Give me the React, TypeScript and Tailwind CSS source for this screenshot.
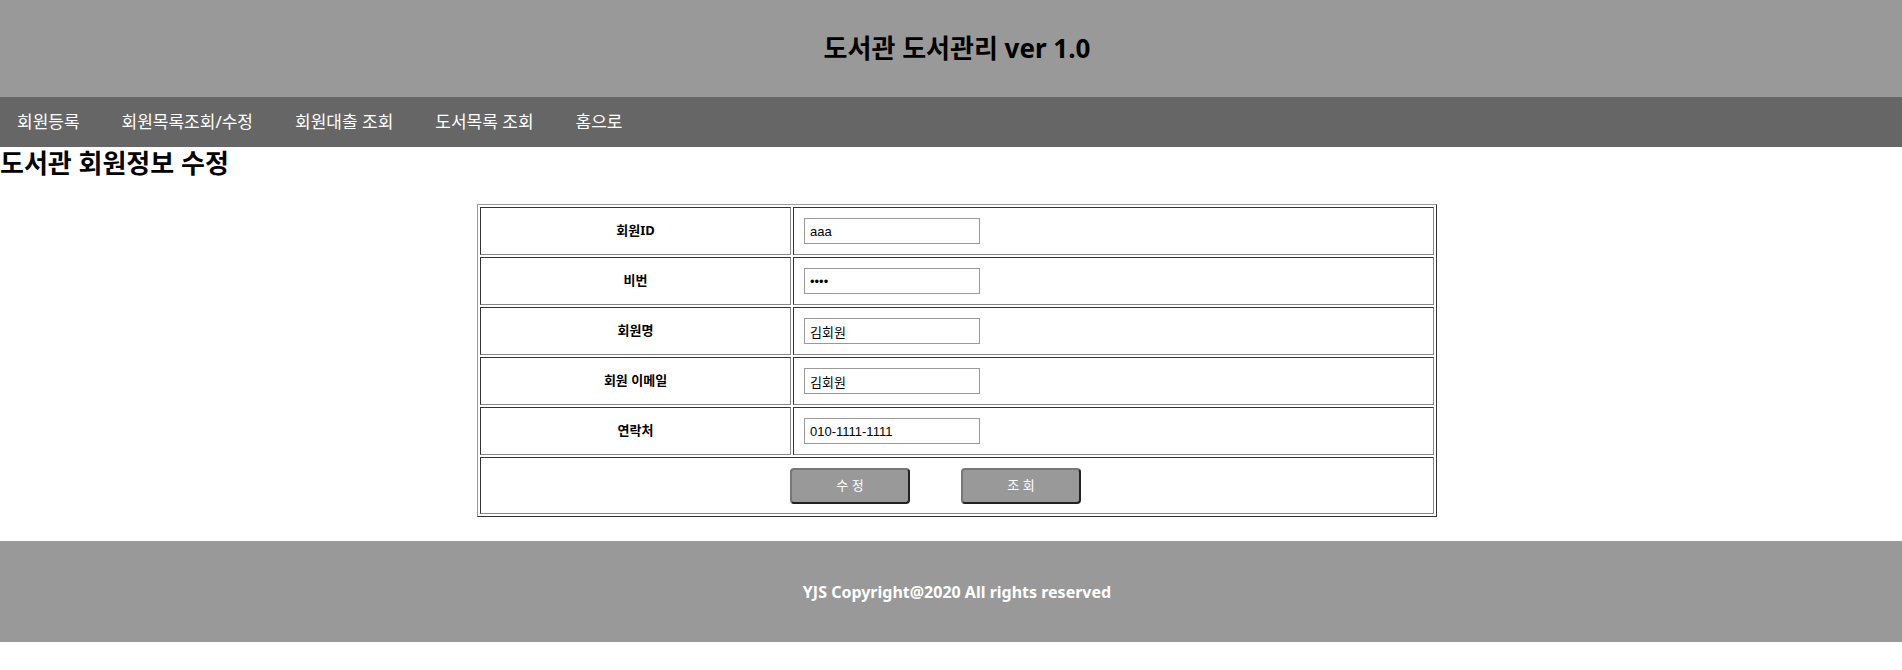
import React from "react";

const font = "font-['Noto_Sans','Noto_Sans_CJK_KR',sans-serif]";
const inputFont = "font-['Liberation_Sans','Noto_Sans_CJK_KR',sans-serif]";

const menus = ["회원등록", "회원목록조회/수정", "회원대출 조회", "도서목록 조회", "홈으로"];

const rows = [
  { label: "회원ID", value: "aaa", type: "text" },
  { label: "비번", value: "1234", type: "password" },
  { label: "회원명", value: "김회원", type: "text" },
  { label: "회원 이메일", value: "김회원", type: "text" },
  { label: "연락처", value: "010-1111-1111", type: "text" },
];

const cell = "border border-t-[#333] border-l-[#333] border-r-[#888] border-b-[#888]";

export default function App() {
  return (
    <div className={`${font} min-h-screen bg-white text-black`}>
      {/* Header */}
      <header className="flex h-[97px] items-center justify-center bg-[#999] pl-3">
        <h1 className="text-[26px] font-bold">도서관 도서관리 ver 1.0</h1>
      </header>

      {/* Menu */}
      <nav className="flex h-[50px] items-center gap-[42px] bg-[#666] pl-[17px] text-[17px] text-white">
        {menus.map((m) => (
          <span key={m} className="cursor-pointer">
            {m}
          </span>
        ))}
      </nav>

      <h2 className="h-[32px] text-[26px] font-bold leading-8">도서관 회원정보 수정</h2>

      {/* Form table */}
      <div className="flex justify-center pl-3 pt-[25px]">
        <table className="w-[960px] border-separate border-spacing-[2px] border border-t-[#999] border-l-[#999] border-r-[#333] border-b-[#333]">
          <tbody>
            {rows.map((r) => (
              <tr key={r.label}>
                <td className={`${cell} h-[48px] w-[311px] text-center text-[13px] font-bold`}>{r.label}</td>
                <td className={`${cell} h-[48px] pl-[10px]`}>
                  <input
                    type={r.type}
                    defaultValue={r.value}
                    className={`${inputFont} block h-[26px] w-[176px] border border-[#999] px-[5px] text-[13px] text-black outline-none`}
                  />
                </td>
              </tr>
            ))}
            <tr>
              <td colSpan={2} className={`${cell} h-[57px]`}>
                <div className="flex items-center gap-[51px] pl-[309px]">
                  {["수 정", "조 회"].map((b) => (
                    <button
                      key={b}
                      className={`${inputFont} h-[36px] w-[120px] rounded-[4px] border-2 border-t-[#777] border-l-[#777] border-r-[#222] border-b-[#222] bg-[#999] text-[13px] text-white`}
                    >
                      {b}
                    </button>
                  ))}
                </div>
              </td>
            </tr>
          </tbody>
        </table>
      </div>

      {/* Footer */}
      <footer className="mt-[24px] flex h-[101px] items-center justify-center bg-[#999] pl-3 text-base font-bold text-white">
        YJS Copyright@2020 All rights reserved
      </footer>
    </div>
  );
}
